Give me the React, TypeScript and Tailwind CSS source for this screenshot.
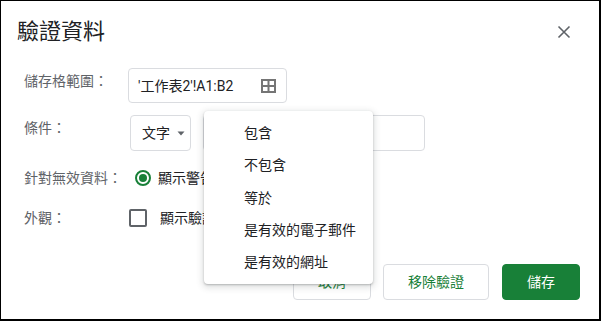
import React from "react"

const font = { fontFamily: 'Roboto, "Noto Sans CJK TC", sans-serif' }

function CloseIcon() {
  return (
    <svg width="14" height="14" viewBox="0 0 14 14" fill="none">
      <path d="M1.5 1.5 L12.5 12.5 M12.5 1.5 L1.5 12.5" stroke="#5f6368" strokeWidth="1.6" />
    </svg>
  )
}

function GridIcon() {
  return (
    <svg width="15" height="14" viewBox="0 0 15 14" fill="none">
      <rect x="1" y="1" width="13" height="12" stroke="#757575" strokeWidth="2" />
      <path d="M7.5 1 V13 M1 7 H14" stroke="#757575" strokeWidth="2" />
    </svg>
  )
}

function Radio({ checked }: { checked?: boolean }) {
  return (
    <span
      className={`flex h-4 w-4 shrink-0 items-center justify-center rounded-full border-2 ${
        checked ? "border-[#188038]" : "border-[#5f6368]"
      }`}
    >
      {checked && <span className="h-2 w-2 rounded-full bg-[#188038]" />}
    </span>
  )
}

const menuItems = ["包含", "不包含", "等於", "是有效的電子郵件", "是有效的網址"]

export default function App() {
  return (
    <div
      style={font}
      className="relative flex h-[321px] w-[601px] flex-col border-l border-t border-r-2 border-b-2 border-black bg-white text-[#202124]"
    >
      {/* header */}
      <div className="mt-[17px] flex items-center justify-between pl-[16px] pr-[23px]">
        <h1 className="text-[22px] leading-[28px] font-normal">驗證資料</h1>
        <button type="button" className="flex h-6 w-6 items-center justify-center">
          <CloseIcon />
        </button>
      </div>

      {/* form */}
      <div className="mt-[22px] flex flex-col pl-[23px] text-sm">
        <div className="flex h-[35px] items-start">
          <span className="mt-[3px] w-[104px] leading-5 text-[#5f6368]">儲存格範圍：</span>
          <div className="flex h-[35px] w-[159px] items-center justify-between rounded border border-[#dadce0] pl-[9px] pr-[10px]">
            <span>'工作表2'!A1:B2</span>
            <GridIcon />
          </div>
        </div>

        <div className="mt-[12px] flex h-9 items-start">
          <span className="mt-[3px] w-[106px] leading-5 text-[#5f6368]">條件：</span>
          <div className="flex h-9 w-[61px] items-center rounded border border-[#dadce0] pl-[11px]">
            <span>文字</span>
            <svg className="ml-[7px]" width="8" height="5" viewBox="0 0 8 5">
              <path d="M0.5 0.5 H7.5 L4 4.5 Z" fill="#5f6368" />
            </svg>
          </div>
          <div className="ml-[12px] h-9 w-[222px] rounded border border-[#dadce0]" />
        </div>

        <div className="mt-[17px] flex h-5 items-center">
          <span className="w-[111px] leading-5 text-[#5f6368]">針對無效資料：</span>
          <Radio checked />
          <span className="ml-[7px] leading-5">顯示警告</span>
        </div>

        <div className="mt-[20px] flex h-5 items-center">
          <span className="w-[105px] leading-5 text-[#5f6368]">外觀：</span>
          <span className="h-[18px] w-[18px] shrink-0 rounded-[2px] border-2 border-[#5f6368]" />
          <span className="ml-[13px] leading-5">顯示驗證說明文字</span>
        </div>
      </div>

      {/* actions */}
      <div className="mt-[36px] flex justify-end gap-[12px] pr-[19px] text-sm">
        <button
          type="button"
          className="h-9 rounded border border-[#dadce0] px-6 text-[#188038]"
        >
          取消
        </button>
        <button
          type="button"
          className="h-9 rounded border border-[#dadce0] px-6 text-[#188038]"
        >
          移除驗證
        </button>
        <button
          type="button"
          className="ml-[1px] h-9 rounded border border-[#188038] bg-[#188038] px-6 text-white"
        >
          儲存
        </button>
      </div>

      {/* open condition menu */}
      <div className="absolute left-[203px] top-[110px] w-[169px] rounded bg-white py-[6px] text-sm shadow-[0_2px_6px_2px_rgba(60,64,67,0.15),0_1px_2px_rgba(60,64,67,0.3)]">
        {menuItems.map((item) => (
          <div key={item} className="flex h-[32.3px] items-center pl-[40px]">
            {item}
          </div>
        ))}
      </div>
    </div>
  )
}
